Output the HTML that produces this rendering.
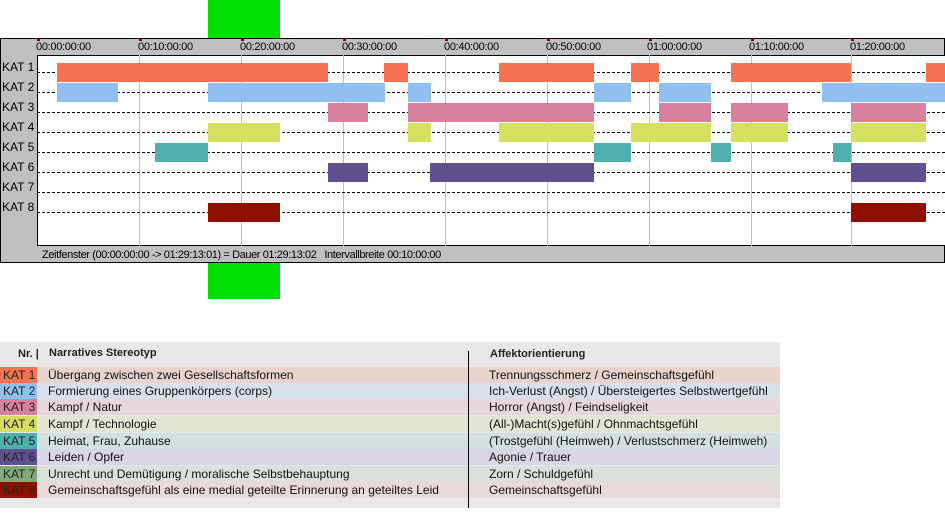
<!DOCTYPE html>
<html><head><meta charset="utf-8"><style>
*{margin:0;padding:0;box-sizing:border-box}
body{width:945px;height:530px;background:#fff;position:relative;overflow:hidden;font-family:"Liberation Sans",Arial,sans-serif;}
.a{position:absolute}
.g{background:#00e000}
.lbl{position:absolute;left:2px;font-size:12px;color:#000}
.dash{position:absolute;left:37px;width:908px;border-top:1px dashed #000;height:0}
.vl{position:absolute;top:55px;height:207px;width:1px;background:#c0c0c0}
.tk{position:absolute;top:41px;font-size:11px;letter-spacing:-0.3px}
.b{position:absolute;height:19px}
.c1{background:#f37352}.c2{background:#90c0f0}.c3{background:#d880a0}.c4{background:#d4e060}.c5{background:#50b0b0}.c6{background:#605090}.c7{background:#80a878}.c8{background:#901000}
.row{position:absolute;left:0;width:780px;height:16px;font-size:12px;line-height:16px}
.row .k{position:absolute;left:0;width:37px;height:16px;padding-left:3px;color:#222}
.row .t{position:absolute;left:48px;color:#111}
.row .u{position:absolute;left:489px;color:#111}
</style></head><body>
<div class="a g" style="left:208px;top:0;width:72px;height:38px"></div>
<div class="a g" style="left:208px;top:262px;width:72px;height:37px"></div>
<div class="a" style="left:0;top:38px;width:945px;height:225px;background:#c0c0c0;border:1px solid #000"></div>
<div class="a" style="left:37px;top:55px;width:908px;height:190px;background:#fff;border-left:1px solid #000;border-top:1px solid #000"></div>
<div class="a" style="left:37px;top:245px;width:908px;height:1px;background:#000"></div>
<div class="vl" style="left:139px"></div><div class="vl" style="left:241px"></div><div class="vl" style="left:343px"></div><div class="vl" style="left:445px"></div><div class="vl" style="left:547px"></div><div class="vl" style="left:649px"></div><div class="vl" style="left:751px"></div><div class="vl" style="left:851px"></div>
<div class="tk" style="left:36px">00:00:00:00</div><div class="tk" style="left:138px">00:10:00:00</div><div class="tk" style="left:240px">00:20:00:00</div><div class="tk" style="left:342px">00:30:00:00</div><div class="tk" style="left:444px">00:40:00:00</div><div class="tk" style="left:546px">00:50:00:00</div><div class="tk" style="left:647px">01:00:00:00</div><div class="tk" style="left:749px">01:10:00:00</div><div class="tk" style="left:850px">01:20:00:00</div>
<div class="a" style="left:37px;top:38px;width:3px;height:3px;background:#800"></div><div class="a" style="left:139px;top:38px;width:3px;height:3px;background:#800"></div><div class="a" style="left:241px;top:38px;width:3px;height:3px;background:#800"></div><div class="a" style="left:343px;top:38px;width:3px;height:3px;background:#800"></div><div class="a" style="left:445px;top:38px;width:3px;height:3px;background:#800"></div><div class="a" style="left:547px;top:38px;width:3px;height:3px;background:#800"></div><div class="a" style="left:649px;top:38px;width:3px;height:3px;background:#800"></div><div class="a" style="left:751px;top:38px;width:3px;height:3px;background:#800"></div><div class="a" style="left:851px;top:38px;width:3px;height:3px;background:#800"></div>
<div class="lbl" style="top:60px">KAT 1</div><div class="lbl" style="top:80px">KAT 2</div><div class="lbl" style="top:100px">KAT 3</div><div class="lbl" style="top:120px">KAT 4</div><div class="lbl" style="top:140px">KAT 5</div><div class="lbl" style="top:160px">KAT 6</div><div class="lbl" style="top:180px">KAT 7</div><div class="lbl" style="top:200px">KAT 8</div>
<div class="dash" style="top:72px"></div><div class="dash" style="top:92px"></div><div class="dash" style="top:112px"></div><div class="dash" style="top:132px"></div><div class="dash" style="top:152px"></div><div class="dash" style="top:172px"></div><div class="dash" style="top:192px"></div><div class="dash" style="top:212px"></div>
<div class="b c1" style="top:63px;left:57px;width:271px"></div><div class="b c1" style="top:63px;left:384px;width:24px"></div><div class="b c1" style="top:63px;left:499px;width:95px"></div><div class="b c1" style="top:63px;left:631px;width:28px"></div><div class="b c1" style="top:63px;left:731px;width:120px"></div><div class="b c1" style="top:63px;left:926px;width:19px"></div>
<div class="b c2" style="top:83px;left:57px;width:61px"></div><div class="b c2" style="top:83px;left:208px;width:177px"></div><div class="b c2" style="top:83px;left:408px;width:23px"></div><div class="b c2" style="top:83px;left:594px;width:37px"></div><div class="b c2" style="top:83px;left:659px;width:52px"></div><div class="b c2" style="top:83px;left:822px;width:123px"></div>
<div class="b c3" style="top:103px;left:328px;width:40px"></div><div class="b c3" style="top:103px;left:408px;width:186px"></div><div class="b c3" style="top:103px;left:659px;width:52px"></div><div class="b c3" style="top:103px;left:731px;width:57px"></div><div class="b c3" style="top:103px;left:851px;width:75px"></div>
<div class="b c4" style="top:123px;left:208px;width:72px"></div><div class="b c4" style="top:123px;left:408px;width:23px"></div><div class="b c4" style="top:123px;left:499px;width:95px"></div><div class="b c4" style="top:123px;left:631px;width:80px"></div><div class="b c4" style="top:123px;left:731px;width:57px"></div><div class="b c4" style="top:123px;left:851px;width:75px"></div>
<div class="b c5" style="top:143px;left:155px;width:53px"></div><div class="b c5" style="top:143px;left:594px;width:37px"></div><div class="b c5" style="top:143px;left:711px;width:20px"></div><div class="b c5" style="top:143px;left:833px;width:18px"></div>
<div class="b c6" style="top:163px;left:328px;width:40px"></div><div class="b c6" style="top:163px;left:430px;width:164px"></div><div class="b c6" style="top:163px;left:851px;width:75px"></div>
<div class="b c8" style="top:203px;left:208px;width:72px"></div><div class="b c8" style="top:203px;left:851px;width:75px"></div>
<div class="a" style="left:42px;top:249px;font-size:11px;letter-spacing:-0.4px">Zeitfenster (00:00:00:00 -&gt; 01:29:13:01) = Dauer 01:29:13:02 &nbsp;&nbsp;Intervallbreite 00:10:00:00</div>

<div class="a" style="left:0;top:342px;width:780px;height:166px;background:#e8e8e8"></div>
<div class="a" style="left:18px;top:348px;font-size:11px;font-weight:bold;color:#222">Nr. |</div>
<div class="a" style="left:49px;top:347px;font-size:11px;font-weight:bold;color:#222">Narratives Stereotyp</div>
<div class="a" style="left:490px;top:348px;font-size:11px;font-weight:bold;color:#222">Affektorientierung</div>
<div class="row" style="top:367px;background:#e8d4cc"><div class="k c1">KAT 1</div><div class="t">Übergang zwischen zwei Gesellschaftsformen</div><div class="u">Trennungsschmerz / Gemeinschaftsgefühl</div></div>
<div class="row" style="top:383px;background:#d8e0e8"><div class="k c2">KAT 2</div><div class="t">Formierung eines Gruppenkörpers (corps)</div><div class="u">Ich-Verlust (Angst) / Übersteigertes Selbstwertgefühl</div></div>
<div class="row" style="top:399px;background:#e6d8da"><div class="k c3">KAT 3</div><div class="t">Kampf / Natur</div><div class="u">Horror (Angst) / Feindseligkeit</div></div>
<div class="row" style="top:416px;background:#e4e4d4"><div class="k c4">KAT 4</div><div class="t">Kampf / Technologie</div><div class="u">(All-)Macht(s)gefühl / Ohnmachtsgefühl</div></div>
<div class="row" style="top:433px;background:#d2e0e0"><div class="k c5">KAT 5</div><div class="t">Heimat, Frau, Zuhause</div><div class="u">(Trostgefühl (Heimweh) / Verlustschmerz (Heimweh)</div></div>
<div class="row" style="top:449px;background:#d8d6e0"><div class="k c6">KAT 6</div><div class="t">Leiden / Opfer</div><div class="u">Agonie / Trauer</div></div>
<div class="row" style="top:466px;background:#dce0da"><div class="k c7">KAT 7</div><div class="t">Unrecht und Demütigung / moralische Selbstbehauptung</div><div class="u">Zorn / Schuldgefühl</div></div>
<div class="row" style="top:482px;background:#e6dada"><div class="k c8">KAT 8</div><div class="t">Gemeinschaftsgefühl als eine medial geteilte Erinnerung an geteiltes Leid</div><div class="u">Gemeinschaftsgefühl</div></div>
<div class="a" style="left:468px;top:351px;width:1px;height:157px;background:#000"></div>
</body></html>
